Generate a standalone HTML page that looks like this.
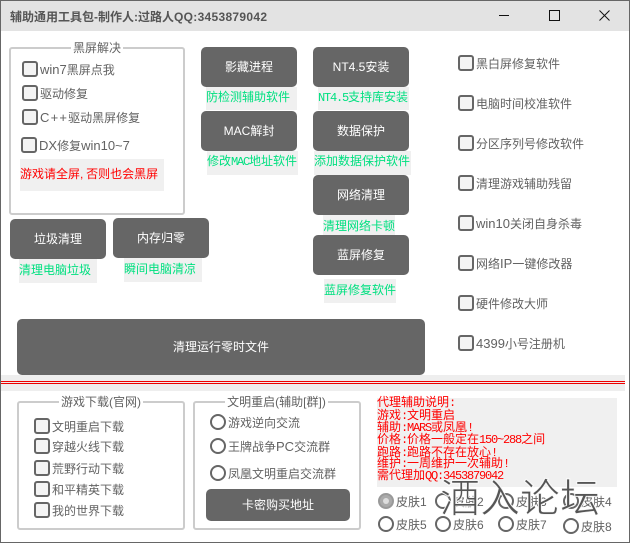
<!DOCTYPE html>
<html><head><meta charset="utf-8">
<style>
html,body{margin:0;padding:0;background:#fff}
#w{position:relative;width:630px;height:543px;overflow:hidden;background:#fff;font:12px/16px "Liberation Sans","Noto Sans CJK SC",sans-serif;color:#626262}
#w div{position:absolute;box-sizing:border-box;white-space:nowrap}
.b{background:#666;color:#fff;border-radius:5px;text-align:center}
.l{background:#f0f0f0;color:#00e080;line-height:22px;font-family:"Liberation Mono","Noto Sans CJK SC",monospace}
.l i,.r i{font-style:normal;letter-spacing:-1.2px}
.c{width:16px;height:16px;border:2px solid #666;border-radius:3px;background:#f4f4f4}
.o{width:16px;height:16px;border:2px solid #666;border-radius:50%;background:#fff}
.t{height:16px;line-height:16px}
.t u{text-decoration:none;font-size:13px}
.g{border:2px solid #ccc;border-radius:3px}
.lg{background:#fff;text-align:center;height:16px;line-height:16px}
.r{color:#f00;font-family:"Liberation Mono","Noto Sans CJK SC",monospace;line-height:12px;height:12px;left:377px}
</style></head><body>
<div id="w">
<div style="left:1px;top:1px;width:628px;height:30px;background:#e3e3e3"></div>
<div class="t" style="left:10px;top:9px;font-weight:bold;color:#555">辅助通用工具包-制作人:过路人<span style="letter-spacing:.3px">QQ:3453879042</span></div>
<svg style="position:absolute;left:495px;top:6px" width="120" height="20" fill="none" stroke="#111" stroke-width="1"><path d="M4 9.5H14"/><path d="M54.5 4.5H64.5V14.5H54.5Z"/><path d="M104.5 4.5L114.5 14.5M114.5 4.5L104.5 14.5"/></svg>

<div class="g" style="left:9px;top:47px;width:176px;height:168px"></div>
<div class="lg" style="left:71px;top:40px;width:52px">黑屏解决</div>
<div class="c" style="left:22px;top:61px"></div><div class="t" style="left:40px;top:62px"><u>win7</u>黑屏点我</div>
<div class="c" style="left:22px;top:85px"></div><div class="t" style="left:40px;top:86px">驱动修复</div>
<div class="c" style="left:22px;top:109px"></div><div class="t" style="left:40px;top:110px"><u style="letter-spacing:1.2px">C++</u>驱动黑屏修复</div>
<div class="c" style="left:21px;top:137px"></div><div class="t" style="left:39px;top:138px"><u>DX</u>修复<u>win10~7</u></div>
<div style="left:20px;top:159px;width:144px;height:32px;background:#f0f0f0;color:#f00;line-height:31px">游戏请全屏<span style="letter-spacing:2.7px">,</span>否则也会黑屏</div>

<div class="b" style="left:201px;top:47px;width:96px;height:40px;line-height:40px">影藏进程</div>
<div class="l" style="left:206px;top:87px;width:91px;height:23px">防检测辅助软件</div>
<div class="b" style="left:201px;top:111px;width:96px;height:40px;line-height:40px">MAC解封</div>
<div class="l" style="left:207px;top:151px;width:91px;height:24px">修改<i>MAC</i>地址软件</div>
<div class="b" style="left:313px;top:47px;width:96px;height:40px;line-height:40px">NT4.5安装</div>
<div class="l" style="left:318px;top:87px;width:91px;height:23px"><i>NT4.5</i>支持库安装</div>
<div class="b" style="left:313px;top:111px;width:96px;height:40px;line-height:40px">数据保护</div>
<div class="l" style="left:314px;top:151px;width:97px;height:24px">添加数据保护软件</div>
<div class="b" style="left:313px;top:175px;width:96px;height:40px;line-height:40px">网络清理</div>
<div class="l" style="left:323px;top:215px;width:72px;height:20px;line-height:24px">清理网络卡顿</div>
<div class="b" style="left:313px;top:235px;width:96px;height:40px;line-height:40px">蓝屏修复</div>
<div class="l" style="left:324px;top:279px;width:72px;height:24px;line-height:24px">蓝屏修复软件</div>
<div class="b" style="left:10px;top:219px;width:96px;height:40px;line-height:40px">垃圾清理</div>
<div class="l" style="left:19px;top:259px;width:78px;height:24px;line-height:24px">清理电脑垃圾</div>
<div class="b" style="left:113px;top:218px;width:96px;height:40px;line-height:40px">内存归零</div>
<div class="l" style="left:124px;top:258px;width:78px;height:24px;line-height:24px">瞬间电脑清凉</div>
<div class="b" style="left:17px;top:319px;width:408px;height:56px;line-height:57px">清理运行零时文件</div>

<div class="c" style="left:458px;top:55px"></div><div class="t" style="left:476px;top:56px">黑白屏修复软件</div>
<div class="c" style="left:458px;top:95px"></div><div class="t" style="left:476px;top:96px">电脑时间校准软件</div>
<div class="c" style="left:458px;top:135px"></div><div class="t" style="left:476px;top:136px">分区序列号修改软件</div>
<div class="c" style="left:458px;top:175px"></div><div class="t" style="left:476px;top:176px">清理游戏辅助残留</div>
<div class="c" style="left:458px;top:215px"></div><div class="t" style="left:476px;top:216px"><u>win10</u>关闭自身杀毒</div>
<div class="c" style="left:458px;top:255px"></div><div class="t" style="left:476px;top:256px">网络<u>IP</u>一键修改器</div>
<div class="c" style="left:458px;top:295px"></div><div class="t" style="left:476px;top:296px">硬件修改大师</div>
<div class="c" style="left:458px;top:335px"></div><div class="t" style="left:476px;top:336px"><u>4399</u>小号注册机</div>

<div style="left:1px;top:375px;width:624px;height:16px;background:#eee"></div>
<div style="left:1px;top:381px;width:624px;height:1px;background:#e00"></div>
<div style="left:1px;top:383px;width:624px;height:1px;background:#e00"></div>

<div class="g" style="left:17px;top:401px;width:168px;height:129px"></div>
<div class="lg" style="left:59px;top:394px;width:84px">游戏下载(官网)</div>
<div class="c" style="left:34px;top:418px"></div><div class="t" style="left:52px;top:419px">文明重启下载</div>
<div class="c" style="left:34px;top:438px"></div><div class="t" style="left:52px;top:439px">穿越火线下载</div>
<div class="c" style="left:34px;top:460px"></div><div class="t" style="left:52px;top:461px">荒野行动下载</div>
<div class="c" style="left:34px;top:481px"></div><div class="t" style="left:52px;top:482px">和平精英下载</div>
<div class="c" style="left:34px;top:502px"></div><div class="t" style="left:52px;top:503px">我的世界下载</div>

<div class="g" style="left:193px;top:401px;width:168px;height:129px"></div>
<div class="lg" style="left:225px;top:394px;width:103px">文明重启(辅助[群])</div>
<div class="o" style="left:210px;top:414px"></div><div class="t" style="left:228px;top:415px">游戏逆向交流</div>
<div class="o" style="left:210px;top:438px"></div><div class="t" style="left:228px;top:439px">王牌战争<u>PC</u>交流群</div>
<div class="o" style="left:210px;top:465px"></div><div class="t" style="left:228px;top:466px">凤凰文明重启交流群</div>
<div class="b" style="left:206px;top:489px;width:144px;height:32px;line-height:33px">卡密购买地址</div>

<div style="left:377px;top:398px;width:240px;height:89px;background:#f0f0f0"></div>
<div class="r" style="top:397px">代理辅助说明<i>:</i></div>
<div class="r" style="top:410px">游戏<i>:</i>文明重启</div>
<div class="r" style="top:422px">辅助<i>:MARS</i>或凤凰<i>!</i></div>
<div class="r" style="top:434px">价格<i>:</i>价格一般定在<i>150~288</i>之间</div>
<div class="r" style="top:447px">跑路<i>:</i>跑路不存在放心<i>!</i></div>
<div class="r" style="top:458px">维护<i>:</i>一周维护一次辅助<i>!</i></div>
<div class="r" style="top:470px">需代理加<i>QQ:3453879042</i></div>

<div class="o" style="left:378px;top:493px;border-color:#999;background:#aaa"></div><div style="left:383px;top:498px;width:6px;height:6px;border-radius:50%;background:#ddd"></div><div class="t" style="left:396px;top:494px">皮肤1</div>
<div class="o" style="left:435px;top:493px"></div><div class="t" style="left:453px;top:494px">皮肤2</div>
<div class="o" style="left:498px;top:493px"></div><div class="t" style="left:516px;top:494px">皮肤3</div>
<div class="o" style="left:563px;top:493px"></div><div class="t" style="left:581px;top:494px">皮肤4</div>
<div class="o" style="left:378px;top:516px"></div><div class="t" style="left:396px;top:517px">皮肤5</div>
<div class="o" style="left:435px;top:516px"></div><div class="t" style="left:453px;top:517px">皮肤6</div>
<div class="o" style="left:498px;top:516px"></div><div class="t" style="left:516px;top:517px">皮肤7</div>
<div class="o" style="left:563px;top:518px"></div><div class="t" style="left:581px;top:519px">皮肤8</div>

<div style="left:440px;top:476px;font-size:40px;line-height:46px;color:#555;-webkit-text-stroke:1px rgba(255,255,255,.9)">酒入论坛</div>

<div style="left:0;top:0;width:630px;height:543px;border:1px solid #666"></div>
</div>
</body></html>
